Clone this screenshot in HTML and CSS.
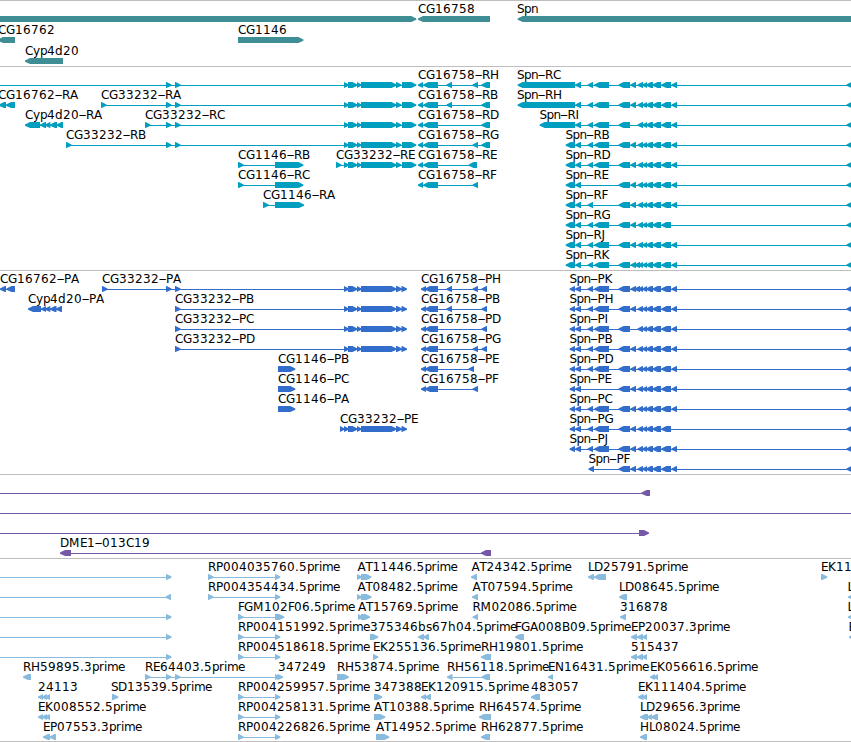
FILE: index.html
```html
<!DOCTYPE html>
<html lang="en">
<head>
    <meta charset="UTF-8">
    <meta name="viewport" content="width=device-width, initial-scale=1.0">
    <title>Genome browser</title>
    <link rel="stylesheet" href="styles.css">
</head>
<body>
    <main class="browser">
        <section class="track track-gene"><svg id="gene"></svg></section>
        <section class="track track-mrna"><svg id="mrna"></svg></section>
        <section class="track track-cds"><svg id="cds"></svg></section>
        <section class="track track-bac"><svg id="bac"></svg></section>
        <section class="track track-est"><svg id="est"></svg></section>
    </main>
    <script src="script.js"></script>
</body>
</html>
```

FILE: styles.css
```css
*{
    margin: 0;
    padding: 0;
    box-sizing: border-box;
}
body{
    background-color: #fff;
    overflow: hidden;
}
.browser{
    display: flex;
    flex-direction: column;
    width: 851px;
    border-bottom: 1px solid #bebebe;
}
.track{
    border-top: 1px solid #bebebe;
    overflow: hidden;
}
.track svg{
    display: block;
    width: 100%;
    height: 100%;
}
.track text{
    font-family: "DejaVu Sans", Verdana, sans-serif;
    font-size: 12px;
    fill: #000;
}
/* long thin hyphen */
.track .dash{
    font-size: 24px;
    font-weight: 200;
}
.track-gene{
    height: 66px;
    fill: #3f8d95;
}
.track-mrna{
    height: 204px;
    fill: #009fc0;
}
.track-cds{
    height: 204px;
    fill: #326dcc;
}
.track-bac{
    height: 84px;
    fill: #7558a6;
}
.track-est{
    height: 183px;
    fill: #88bbdd;
}
```

FILE: script.js
```js
// advance of each character in the labels, 8px when not listed
const advance = {
    G: 9, D: 9, H: 9, N: 9, M: 11, E: 7, P: 7, T: 7, S: 7, F: 6, L: 6, I: 4, J: 4,
    '-': 7, '.': 4, y: 7, p: 7, n: 7, r: 5, i: 3, m: 11, e: 7, s: 6
};

// shared exons
const intron = [[166, 171.5], [175, 180.5]];
const body = [[344, 349], [348, 357.5], [357, 361.5], [361, 396.5]];
const utr = [...body, [396, 401.5], [402, 416.3]];
const cds = [...body, [396, 402], [401.5, 407]];
const first = [[575.2, 581]];
const second = [[587.6, 593]];
const third = [[594.3, 609]];
const mid = [[618.5, 630]];
const gap = [[630.3, 636]];
const tail = [[637.5, 643], [642.3, 647], [646, 653], [652.5, 661], [661.3, 671]];
const end = [[671.5, 677]];
const next = [[846.5, 870]];
const dense = [[630.5, 636], [634.5, 640], [638, 643], [642.3, 647], [646, 653], [652.5, 661], [661.3, 671]];
const spn = [...first, ...second, ...third, ...mid, ...gap, ...tail, ...end, ...next];
const spnDense = [...first, ...second, ...third, ...mid, ...dense, ...end, ...next];

// [row, strand, label, label x, exons]
const gene = [
    [0, '>', '', 0, [[-50, 416.3]]],
    [0, '<', 'CG16758', 418, [[418, 490]]],
    [0, '<', 'Spn', 517, [[517.6, 900]]],
    [1, '<', 'CG16762', -2, [[-2, 15]]],
    [1, '>', 'CG1146', 238, [[238, 303.4]]],
    [2, '<', 'Cyp4d20', 25, [[25, 63]]]
];

const mrna = [
    [0, '>', '', 0, [[-50, -40], ...intron, ...utr]],
    [1, '<', 'CG16762-RA', -2, [[-1, 6], [6, 15]]],
    [1, '>', 'CG33232-RA', 101, [[101, 106.5], ...intron, ...utr]],
    [2, '<', 'Cyp4d20-RA', 25, [[25, 40], [40, 46], [45, 50.3], [50, 57], [56.5, 63]]],
    [2, '>', 'CG33232-RC', 145, [[145, 150.5], ...intron, ...utr]],
    [3, '>', 'CG33232-RB', 66, [[66, 71.5], ...intron, ...utr]],
    [4, '>', 'CG1146-RB', 238, [[238, 243.7], [275, 303.4]]],
    [5, '>', 'CG1146-RC', 238, [[238, 243.7], [275, 303.4]]],
    [6, '>', 'CG1146-RA', 263, [[263, 268.7], [275, 304]]],
    [4, '>', 'CG33232-RE', 336, [[336, 341.5], ...utr]],
    [0, '<', 'CG16758-RH', 418, [[418, 423], [423.3, 438], [446.5, 452], [472.6, 478], [481.4, 490]]],
    [1, '<', 'CG16758-RB', 418, [[418, 423], [423.3, 438], [446.5, 452], [481.4, 490]]],
    [2, '<', 'CG16758-RD', 418, [[418, 423], [423.3, 438], [481.4, 490]]],
    [3, '<', 'CG16758-RG', 418, [[418, 423], [423.3, 438], [472.6, 478], [481.4, 490]]],
    [4, '<', 'CG16758-RE', 418, [[418, 423], [423.3, 438], [468.6, 477]]],
    [5, '<', 'CG16758-RF', 418, [[418, 423], [423.3, 438], [472.6, 478]]],
    [0, '<', 'Spn-RC', 517, [[517.6, 575], ...spn]],
    [1, '<', 'Spn-RH', 517, [[517.6, 575], ...spn]],
    [2, '<', 'Spn-RI', 539.5, [[539.7, 575], ...first, ...second, ...third, ...mid, ...tail, ...end, ...next]],
    [3, '<', 'Spn-RB', 565.5, [[565.7, 575], ...spn]],
    [4, '<', 'Spn-RD', 565.5, [[565.7, 575], ...spn]],
    [5, '<', 'Spn-RE', 565.5, [[565.7, 575], ...first, ...mid, ...gap, ...tail, ...end, ...next]],
    [6, '<', 'Spn-RF', 565.5, [[565.7, 575], ...first, ...second, ...mid, ...gap, ...tail, ...end, ...next]],
    [7, '<', 'Spn-RG', 565.5, [[565.7, 575], ...first, ...second, ...third, ...mid, ...gap, ...tail, ...next]],
    [8, '<', 'Spn-RJ', 565.5, [[565.7, 575], ...spn]],
    [9, '<', 'Spn-RK', 565.5, [[565.7, 575], ...spnDense]]
];

const protein = [
    [0, '<', 'CG16762-PA', 0, [[0, 6], [6.5, 15]]],
    [0, '>', 'CG33232-PA', 102, [[102, 107.5], ...intron, ...cds]],
    [1, '<', 'Cyp4d20-PA', 28, [[28, 41], [41, 46], [45, 50.3], [50, 56.5], [56, 62]]],
    [1, '>', 'CG33232-PB', 175, [[175, 180.5], ...cds]],
    [2, '>', 'CG33232-PC', 175, [[175, 180.5], ...cds]],
    [3, '>', 'CG33232-PD', 175, [[175, 180.5], ...cds]],
    [4, '>', 'CG1146-PB', 278, [[278, 295.3]]],
    [5, '>', 'CG1146-PC', 278, [[278, 295.3]]],
    [6, '>', 'CG1146-PA', 278, [[278, 295.3]]],
    [7, '>', 'CG33232-PE', 340, [[340, 344.5], ...cds]],
    [0, '<', 'CG16758-PH', 421, [[421, 426], [425, 438], [446.5, 452], [472.6, 478], [481.5, 487]]],
    [1, '<', 'CG16758-PB', 421, [[421, 426], [425, 438], [446.5, 452], [481.5, 487]]],
    [2, '<', 'CG16758-PD', 421, [[421, 426], [425, 438], [481.5, 487]]],
    [3, '<', 'CG16758-PG', 421, [[421, 426], [425, 438], [472.6, 478], [481.5, 487]]],
    [4, '<', 'CG16758-PE', 421, [[421, 426], [425, 438], [468.6, 474]]],
    [5, '<', 'CG16758-PF', 421, [[421, 426], [425, 438], [472.6, 478]]],
    [0, '<', 'Spn-PK', 569.5, [[569.6, 575], ...spnDense]],
    [1, '<', 'Spn-PH', 569.5, [[569.6, 575], ...spn]],
    [2, '<', 'Spn-PI', 569.5, [[569.6, 575], ...first, ...second, ...third, ...mid, ...tail, ...end, ...next]],
    [3, '<', 'Spn-PB', 569.5, [[569.6, 575], ...spn]],
    [4, '<', 'Spn-PD', 569.5, [[569.6, 575], ...spn]],
    [5, '<', 'Spn-PE', 569.5, [[569.6, 575], ...first, ...mid, ...gap, ...tail, ...end, ...next]],
    [6, '<', 'Spn-PC', 569.5, [[569.6, 575], ...spn]],
    [7, '<', 'Spn-PG', 569.5, [[569.6, 575], ...first, ...second, ...third, ...mid, ...gap, ...tail, ...next]],
    [8, '<', 'Spn-PJ', 569.5, [[569.6, 575], ...spn]],
    [9, '<', 'Spn-PF', 588.5, [[588.5, 594], ...mid, ...gap, ...tail, ...end, ...next]]
];

const bac = [
    [0, '<', '', 0, [[-50, -40], [641.5, 650]]],
    [1, '<', '', 0, [[-50, -40], [880, 890]]],
    [2, '>', '', 0, [[-50, -40], [639, 649]]],
    [3, '<', 'DME1-013C19', 60, [[60, 71], [481, 491]]]
];

const est = [
    [0, '>', '', 0, [[-50, -40], [166, 171.5]]],
    [1, '<', '', 0, [[-50, -40], [165.5, 171]]],
    [2, '>', '', 0, [[-50, -40], [166, 171.5]]],
    [3, '>', '', 0, [[-50, -40], [166, 171.5]]],
    [4, '>', '', 0, [[-50, -40], [166, 171.5]]],
    [5, '<', 'RH59895.3prime', 23, [[23, 31]]],
    [6, '<', '24113', 38, [[38, 43], [42, 47], [45, 50]]],
    [7, '<', 'EK008552.5prime', 38, [[38, 43], [42, 47], [45, 50]]],
    [8, '<', 'EP07553.3prime', 43, [[43, 50], [49.5, 56]]],
    [5, '>', 'RE64403.5prime', 145, [[145, 150.5], ...intron, [275, 280]]],
    [6, '>', 'SD13539.5prime', 111, [[112, 118.3]]],
    [0, '>', 'RP004035760.5prime', 208, [[208, 213.5], [275, 280.3]]],
    [1, '>', 'RP004354434.5prime', 208, [[208, 213.5], [275, 280.3]]],
    [2, '>', 'FGM102F06.5prime', 238, [[238, 243.7], [275, 284.3]]],
    [3, '>', 'RP004151992.5prime', 238, [[238, 243.7], [275, 280.3]]],
    [4, '>', 'RP004518618.5prime', 238, [[238, 243.7], [275, 280.3]]],
    [5, '>', '347249', 278, [[277.5, 283]]],
    [6, '>', 'RP004259957.5prime', 238, [[238, 243.7], [275, 280.3]]],
    [7, '>', 'RP004258131.5prime', 238, [[238, 243.7], [275, 280.3]]],
    [8, '>', 'RP004226826.5prime', 238, [[238, 243.7], [275, 280.3]]],
    [0, '>', 'AT11446.5prime', 357.5, [[357, 362], [361, 371.5]]],
    [1, '>', 'AT08482.5prime', 357.5, [[357, 362], [361, 371.5]]],
    [2, '>', 'AT15769.5prime', 358, [[358, 363], [361, 370]]],
    [3, '>', '375346', 370, [[370, 378.3]]],
    [4, '>', 'EK255136.5prime', 373, [[373, 378.3]]],
    [5, '>', 'RH53874.5prime', 337, [[337, 349]]],
    [6, '>', '347388', 374, [[374, 382.3]]],
    [7, '>', 'AT10388.5prime', 374, [[374, 385.3]]],
    [8, '>', 'AT14952.5prime', 376, [[376, 389.3]]],
    [3, '<', 'bs67h04.5prime', 418, [[418, 424], [423, 429]]],
    [6, '<', 'EK120915.5prime', 421, [[421, 426], [425, 431]]],
    [0, '<', 'AT24342.5prime', 471.5, [[471, 477]]],
    [1, '<', 'AT07594.5prime', 472.5, [[472, 478]]],
    [2, '<', 'RM02086.5prime', 472.5, [[472.6, 478]]],
    [3, '<', 'FGA008B09.5prime', 515, [[515, 524]]],
    [4, '<', 'RH19801.5prime', 481, [[481, 491]]],
    [5, '<', 'RH56118.5prime', 447, [[447, 452.5], [481.5, 490]]],
    [5, '<', 'EN16431.5prime', 548, [[548, 553]]],
    [6, '<', '483057', 531, [[531, 540]]],
    [7, '<', 'RH64574.5prime', 479, [[479, 491]]],
    [8, '<', 'RH62877.5prime', 481, [[481, 490]]],
    [0, '<', 'LD25791.5prime', 588, [[588, 594], [594, 606]]],
    [1, '<', 'LD08645.5prime', 619, [[619, 627]]],
    [2, '<', '316878', 620, [[620, 626]]],
    [3, '<', 'EP20037.3prime', 631, [[631, 637], [637, 643], [642, 647]]],
    [4, '<', '515437', 631, [[631, 637], [637, 643], [642, 647]]],
    [5, '<', 'EK056616.5prime', 650, [[650, 655], [653.5, 658]]],
    [6, '<', 'EK111404.5prime', 638, [[638, 643.5], [642, 647]]],
    [7, '<', 'LD29656.3prime', 640, [[640, 648], [647, 652], [651, 658]]],
    [8, '<', 'HL08024.5prime', 640, [[640, 647]]],
    [0, '>', 'EK11', 821, [[821, 827.3]]],
    [1, '<', 'L', 847.5, [[848, 856]]],
    [2, '<', 'L', 847.5, [[848, 856]]],
    [3, '<', 'E', 848.5, [[849, 856]]]
];

function arrow(x1, x2, y, strand) {
    const head = Math.min(5, x2 - x1);
    let tip = x1, neck = x1 + head, back = x2;
    if (strand === '>') {
        tip = x2;
        neck = x2 - head;
        back = x1;
    }
    return `<polygon points="${tip},${y + 2.4} ${neck},${y} ${back},${y} ${back},${y + 6} ${neck},${y + 6} ${tip},${y + 3.8}"/>`;
}

function label(text, x, y) {
    let out = '';
    for (const part of text.split(/(-)/)) {
        const xs = [];
        for (const c of part) {
            xs.push(x);
            x += advance[c] || 8;
        }
        if (part === '-') {
            out += `<tspan class="dash" x="${xs[0] - 0.7}" y="${y + 3}">-</tspan>`;
        } else {
            out += `<tspan x="${xs.join(' ')}" y="${y}">${part}</tspan>`;
        }
    }
    return `<text>${out}</text>`;
}

function drawTrack(id, features, pitch) {
    let out = '';
    for (const [row, strand, name, x, exons] of features) {
        const y = 15 + row * pitch;
        const start = exons[0][0];
        const stop = exons[exons.length - 1][1];
        if (exons.length > 1) {
            out += `<rect x="${start + 1}" y="${y + 3}" width="${stop - start - 2}" height="1"/>`;
        }
        for (const [x1, x2] of exons) {
            out += arrow(x1, x2, y, strand);
        }
        if (name) {
            out += label(name, x, y - 3);
        }
    }
    document.getElementById(id).innerHTML = out;
}

drawTrack('gene', gene, 21);
drawTrack('mrna', mrna, 20);
drawTrack('cds', protein, 20);
drawTrack('bac', bac, 20);
drawTrack('est', est, 20);
```
